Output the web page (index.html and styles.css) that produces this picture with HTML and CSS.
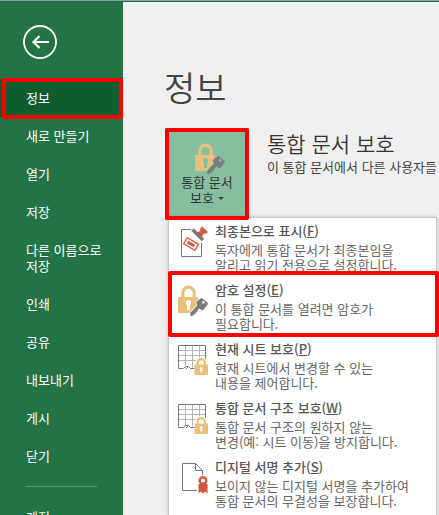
FILE: index.html
```html
<!doctype html>
<html lang="ko">
<head>
	<meta charset="utf-8">
	<meta name="viewport" content="width=device-width, initial-scale=1.0">
	<title>정보</title>
	<link rel="stylesheet" href="styles.css">
</head>
<body>

<!-- shared icon shapes -->
<svg class="defs" aria-hidden="true">
	<symbol id="lock-key" viewBox="0 0 30 32">
		<path d="M4.800 13V8a5.700 5.800 0 0 1 11.400 0V13" fill="none" stroke="#e8c07a" stroke-width="3.200"/>
		<path d="M1 12h18q1 0 1 1v14q0 1-1 1H1q-1 0-1-1V13q0-1 1-1z" fill="#e8c07a"/>
		<path d="M10.500 15a2.700 2.700 0 0 1 1.500 4.900V25h-3v-5.100A2.700 2.700 0 0 1 10.500 15z" fill="currentColor"/>
		<path d="M22.500 13.500q.9-.8 1.900 0l4.900 4q1 .9.300 1.900l-4 5.300q-.7.800-1.700.3l-2.600-1.600-2 2.200.2 1.600-1.900.2-.3 2-2 .1-.2 1.200-2.700.2-.2-2.800 7.200-7.800-1.100-2q-.3-.8.400-1.500z" fill="#7b7b7b" stroke="currentColor" stroke-width="1.600" paint-order="stroke"/>
		<circle cx="25.300" cy="17.400" r="1.300" fill="currentColor"/>
	</symbol>
	<symbol id="sheet-lock" viewBox="0 0 30 32">
		<path d="M.5 6.500h27M.5 11.500h27M.5 16.500h18M7.500 1.500v22M14.500 1.500v22M21.500 1.500v14" fill="none" stroke="#b4b4b4"/>
		<path d="M27.500 15V1.500H.5v23h5l2-2h3l2 2h4M8 25l2-2" fill="none" stroke="#777"/>
		<path d="M19.500 21v-2.200a3.700 3.700 0 0 1 7.400 0V21" fill="none" stroke="#fff" stroke-width="4"/>
		<path d="M19.500 22v-3.200a3.700 3.700 0 0 1 7.400 0V22" fill="none" stroke="#e8c07a" stroke-width="2.200"/>
		<path d="M16.500 20.500H30V31H16.500z" fill="#e8c07a"/>
		<path d="M23.200 23a1.600 1.600 0 0 1 1 2.800v2.700h-2v-2.700a1.600 1.600 0 0 1 1-2.800z" fill="#fff"/>
	</symbol>
</svg>

<div class="titlebar"></div>

<div class="backstage">
	<nav class="sidebar">
		<button class="back" type="button" aria-label="뒤로">
			<svg width="34" height="34" viewBox="0 0 34 34" fill="none" stroke="#fff">
				<circle cx="17" cy="17" r="16" stroke-width="1.800"/>
				<path d="M26 17H10.500M16.500 11l-6 6 6 6" stroke-width="2.200"/>
			</svg>
		</button>
		<a class="nav-item active marked" href="#info">정보</a>
		<a class="nav-item" href="#new">새로 만들기</a>
		<a class="nav-item" href="#open">열기</a>
		<a class="nav-item" href="#save">저장</a>
		<a class="nav-item" href="#saveas">다른 이름으로 저장</a>
		<a class="nav-item" href="#print">인쇄</a>
		<a class="nav-item" href="#share">공유</a>
		<a class="nav-item" href="#export">내보내기</a>
		<a class="nav-item" href="#publish">게시</a>
		<a class="nav-item" href="#close">닫기</a>
		<hr class="divider">
		<a class="nav-item" href="#account">계정</a>
	</nav>

	<main class="content" id="info">
		<h1 class="page-title">정보</h1>

		<section class="protect">
			<button class="protect-button marked" type="button" aria-haspopup="menu" aria-expanded="true">
				<svg class="icon" width="30" height="32"><use href="#lock-key"/></svg>
				<span>통합 문서</span>
				<span class="with-arrow">보호 <i class="arrow"></i></span>
			</button>
			<div class="protect-text">
				<h2>통합 문서 보호</h2>
				<p>이 통합 문서에서 다른 사용자들</p>
			</div>

			<div class="menu" role="menu">
				<button class="menu-item" type="button" role="menuitem">
					<svg class="icon" width="30" height="32" viewBox="0 0 30 32">
						<path d="M13 3.500H3.500v27h20V17" fill="none" stroke="#777"/>
						<g transform="rotate(30 13 18)">
							<path d="M6.500 14.500h13v7h-13z" fill="#fff" stroke="#d4593c" stroke-width="1.300"/>
							<path d="M9 16.500h8v3H9z" fill="#d4593c"/>
						</g>
						<path d="M14.500 3.500l10.500 10.500" stroke="#7b7b7b" stroke-width="3.600"/>
						<path d="M19 6.500l3-1.500.5-3L24 .5l6 5.500-1.500 1.500-3 .2L24 11z" fill="#d4593c"/>
					</svg>
					<span class="menu-text">
						<strong>최종본으로 표시(<u>F</u>)</strong>
						<span>독자에게 통합 문서가 최종본임을<br>알리고 읽기 전용으로 설정합니다.</span>
					</span>
				</button>
				<button class="menu-item marked" type="button" role="menuitem">
					<svg class="icon" width="30" height="32"><use href="#lock-key"/></svg>
					<span class="menu-text">
						<strong>암호 설정(<u>E</u>)</strong>
						<span>이 통합 문서를 열려면 암호가<br>필요합니다.</span>
					</span>
				</button>
				<button class="menu-item" type="button" role="menuitem">
					<svg class="icon" width="30" height="32"><use href="#sheet-lock"/></svg>
					<span class="menu-text">
						<strong>현재 시트 보호(<u>P</u>)</strong>
						<span>현재 시트에서 변경할 수 있는<br>내용을 제어합니다.</span>
					</span>
				</button>
				<button class="menu-item" type="button" role="menuitem">
					<svg class="icon" width="30" height="32"><use href="#sheet-lock"/></svg>
					<span class="menu-text">
						<strong>통합 문서 구조 보호(<u>W</u>)</strong>
						<span>통합 문서 구조의 원하지 않는<br>변경(예: 시트 이동)을 방지합니다.</span>
					</span>
				</button>
				<button class="menu-item" type="button" role="menuitem">
					<svg class="icon" width="30" height="32" viewBox="0 0 30 32">
						<path d="M19 28.500H4.500v-27h13l7 7V13M17.500 1.500v7h7" fill="none" stroke="#777"/>
						<path d="M20.500 22h9v9.500l-2.200-2-2.300 2-2.300-2-2.200 2z" fill="#d4593c"/>
						<circle cx="25" cy="18.500" r="3.300" fill="#fff" stroke="#d4593c" stroke-width="2.400"/>
					</svg>
					<span class="menu-text">
						<strong>디지털 서명 추가(<u>S</u>)</strong>
						<span>보이지 않는 디지털 서명을 추가하여<br>통합 문서의 무결성을 보장합니다.</span>
					</span>
				</button>
			</div>
		</section>
	</main>
</div>

</body>
</html>
```
FILE: styles.css
```css
* {
	box-sizing: border-box;
}
body {
	margin: 0;
	height: 100vh;
	overflow: hidden;
	display: flex;
	flex-direction: column;
	background: #f0f0f0;
	color: #444;
	font: 13px/16px "Noto Sans CJK KR", sans-serif;
}
button {
	margin: 0;
	padding: 0;
	border: 0;
	background: none;
	color: inherit;
	font: inherit;
}
.defs {
	position: absolute;
	width: 0;
	height: 0;
}
.titlebar {
	flex: none;
	height: 2px;
	background: #8c9db3;
	border-bottom: 1px solid #227447;
}
.backstage {
	flex: 1;
	min-height: 0;
	display: flex;
}

/* red frame round the things to click */
.marked {
	position: relative;
}
.marked::after {
	content: "";
	position: absolute;
	inset: 0;
	border: 4px solid #f00;
	border-radius: 2px;
	z-index: 2;
}

/* sidebar */
.sidebar {
	flex: none;
	width: 123px;
	background: #227447;
}
.back {
	display: block;
	margin: 23px 0 20px 23px;
}
.back svg {
	display: block;
}
.nav-item {
	display: block;
	padding: 11px 16px 11px 26px;
	color: #fff;
	text-decoration: none;
}
.nav-item.active {
	background: #0f5c2f;
}
.nav-item.marked::after {
	inset: -1px 0 -2px 2px;
}
.divider {
	margin: 11px 26px;
	border: 0;
	border-top: 1px solid #4f9a6d;
}

/* content */
.content {
	flex: 1;
	min-width: 0;
	padding: 61px 0 0 41px;
}
.page-title {
	margin: 0 0 17px;
	font-size: 34px;
	line-height: 48px;
	font-weight: 350;
}
.protect {
	position: relative;
	display: flex;
	gap: 18px;
	padding-left: 1px;
}
.protect-button {
	flex: none;
	width: 84px;
	height: 92px;
	padding-top: 15px;
	display: flex;
	flex-direction: column;
	align-items: center;
	background: #86bf9f;
	color: #333;
}
.protect-button .icon {
	margin: 0 0 -1px 6px;
	color: #86bf9f;
}
.with-arrow {
	display: flex;
	align-items: center;
	gap: 4px;
}
.arrow {
	border: 3px solid transparent;
	border-top-color: #444;
	border-bottom: 0;
}
.protect-text {
	flex: 1;
	min-width: 0;
	white-space: nowrap;
}
.protect-text h2 {
	margin: 0;
	color: #333;
	font-size: 21px;
	line-height: 30px;
	font-weight: 350;
}
.protect-text p {
	margin: 0;
	line-height: 18px;
}

/* drop-down menu */
.menu {
	position: absolute;
	top: 89px;
	left: 4px;
	right: 2px;
	padding-bottom: 4px;
	background: #fff;
	border: 1px solid #c6c6c6;
	box-shadow: 0 0 4px rgba(0, 0, 0, .2);
}
.menu-item {
	display: flex;
	gap: 7px;
	width: 100%;
	padding: 3px 0 5px 9px;
	text-align: left;
}
.menu-item .icon {
	flex: none;
	margin-top: 5px;
	color: #fff;
}
.menu-text {
	color: #666;
	line-height: 15px;
	white-space: nowrap;
}
.menu-text strong {
	display: block;
	margin-bottom: 1px;
	color: #555;
	line-height: 20px;
	font-weight: 500;
}
.menu-item.marked::after {
	inset: -6px -3px -1px -1px;
}
```
